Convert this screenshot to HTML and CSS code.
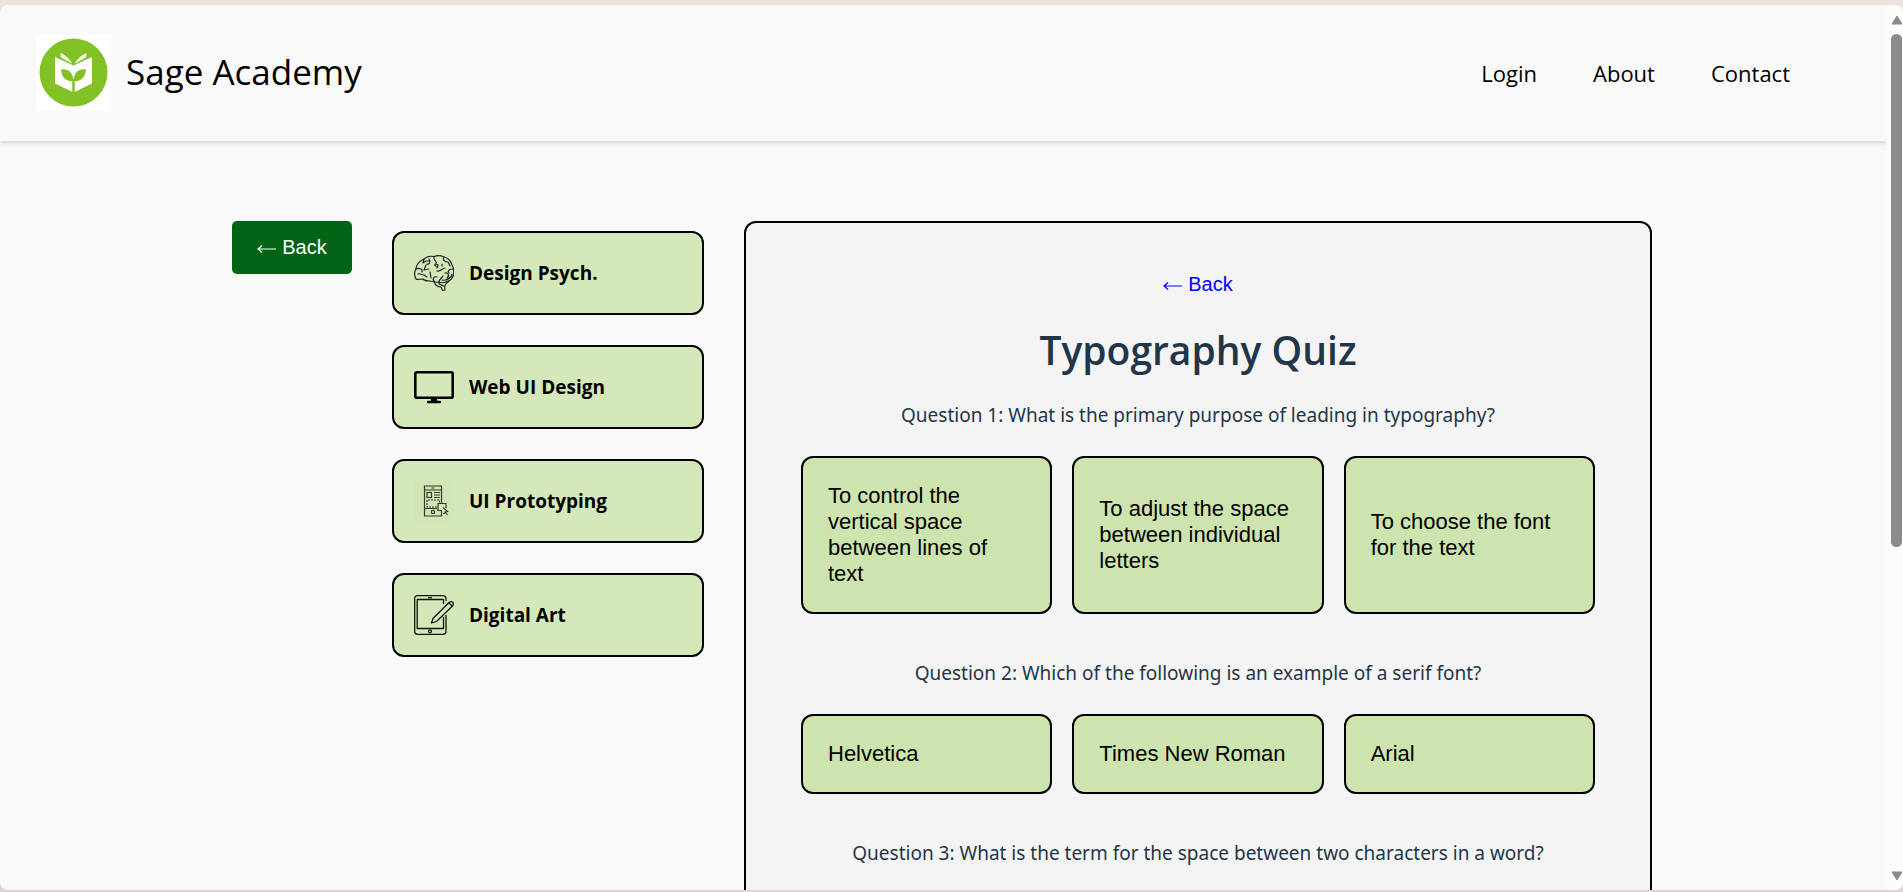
FILE: index.html
```html
<!DOCTYPE html>
<html lang="en">
<head>
<meta charset="utf-8">
<title>Sage Academy</title>
<link rel="stylesheet" href="styles.css">
</head>
<body>
<div class="window">
  <div class="page">
    <header class="header">
      <div class="brand">
        <svg class="logo" viewBox="0 0 75 76" aria-hidden="true">
          <rect width="75" height="76" fill="#fff"/>
          <circle cx="37.500" cy="37.500" r="34" fill="#82c226"/>
          <path d="M19 22L37.500 30.500L56 22V48.500L38.500 57V46H36.500V57L19 48.500Z" fill="#fff"/>
          <path d="M24.500 18C29 20 34 24 36 28.500L25 22.500ZM50.500 18C46 20 41 24 39 28.500L50 22.500Z" fill="#fff"/>
          <path d="M25 34.500C32 33.500 37 37 37.500 46C30 47 25.500 42 25 34.500ZM50 34.500C43 33.500 38 37 37.500 46C45 47 49.500 42 50 34.500Z" fill="#82c226"/>
          <path d="M37.500 44V57" stroke="#82c226" stroke-width="2"/>
        </svg>
        <span class="brand-name">Sage Academy</span>
      </div>
      <nav class="nav">
        <a href="#login">Login</a>
        <a href="#about">About</a>
        <a href="#contact">Contact</a>
      </nav>
    </header>
    <main class="main">
      <button class="back-button" type="button"><svg class="arrow" viewBox="0 0 20 12" aria-hidden="true"><path d="M19 7H1M5 3.500L1 7L5 10.500"/></svg>Back</button>
      <aside class="sidebar">
        <a class="course" href="#psych">
          <svg class="icon" viewBox="0 0 40 40" aria-hidden="true" fill="none" stroke="#222" stroke-width="1.200" stroke-linecap="round" stroke-linejoin="round">
            <path d="M2 26C0 22 0 19 2 16C2 11 6 8 10 6C13 3 17 3 20 3.500C24 2 28 3 30 4C34 5 37 8 38 12C40 15 40 18 39.500 21C39.500 25 36 28 33 28.500C30 30 27 30 25 29C21 30 18 28 16 28C12 28 10 27 9 26C6 26 3 27 2 26Z"/>
            <path d="M20 28C21 32 24 34 27 34L28.500 37.500L31 37C30 33 31 31 35 28M25 29C24 32 28 32 30 33M38 21C38 25 32 28 28 27"/>
            <path d="M10 6L9 10L12 8L15 8M12 12L10 17M2 16C6 14 9 17 8 19M10 17L15 16M15 6C17 9 15 12 13 11M20 4C19 8 24 8 22 11C20 11 20 13 24 14M22 11L24 12L23 15M30 4C28 7 31 9 34 9M34 9L36 13M23 18C27 19 28 15 31 15M39 16C35 16 33 18 35 20M31 20C34 19 36 23 33 25M4 21C6 20 7 22 10 22L13 24M20 28C18 26 20 23 23 24M16 19L17 25M25 29C25 26 28 25 29 23M28 11V13"/>
          </svg>
          Design Psych.
        </a>
        <a class="course" href="#web">
          <svg class="icon" viewBox="0 0 40 40" aria-hidden="true" fill="none" stroke="#000">
            <rect x="1.300" y="5.300" width="37.400" height="25.400" rx="1.500" stroke-width="2.600"/>
            <path d="M17 31.500H23V34H17Z" fill="#000" stroke="none"/>
            <path d="M14 35H26" stroke-width="2.400" stroke-linecap="round"/>
          </svg>
          Web UI Design
        </a>
        <a class="course" href="#prototyping">
          <svg class="icon" viewBox="0 0 40 40" aria-hidden="true" fill="none" stroke="#333d2b" stroke-width="1.200">
            <rect width="40" height="40" fill="#d2e5b7" stroke="none"/>
            <path d="M24 35H10.500V5H27.500V22M10.500 9H27.500M17.500 7H20.500M10.500 27.500H23M27.500 30V35H23"/>
            <rect x="13" y="11.500" width="4.500" height="5"/>
            <path d="M20 11.500H26M20 14H26M20 16.500H26"/>
            <path d="M23 26H13V19H25.500V22" stroke-dasharray="2 1"/>
            <circle cx="19" cy="31" r="1.700"/>
            <path d="M28 29.500H24V22.500H32V27"/>
            <path d="M29 26.500L33.500 30.500L31.500 31L33.500 34M31.500 31L29.500 33Z"/>
          </svg>
          UI Prototyping
        </a>
        <a class="course" href="#art">
          <svg class="icon" viewBox="0 0 40 40" aria-hidden="true" fill="none" stroke="#10140c" stroke-width="1.300" stroke-linejoin="round">
            <path d="M32 6V3.500Q32 .7 29 .7H3.500Q.7 .7 .7 3.500V36.500Q.7 39.300 3.500 39.300H29Q32 39.300 32 36.500V20"/>
            <path d="M29.500 9V4.500H3.200V33.500H29.500V22M14 2.600H18"/>
            <circle cx="16" cy="36.300" r="1.500"/>
            <path d="M17.500 28L19 23.500L35 7.500Q37 5.800 38.800 7.200Q40 9 38.500 11L22.500 26.500ZM35 8L38 11"/>
          </svg>
          Digital Art
        </a>
      </aside>
      <section class="quiz">
        <a class="quiz-back" href="#back"><svg class="arrow" viewBox="0 0 20 12" aria-hidden="true"><path d="M19 7H1M5 3.500L1 7L5 10.500"/></svg>Back</a>
        <h1 class="quiz-title">Typography Quiz</h1>
        <p class="question">Question 1: What is the primary purpose of leading in typography?</p>
        <div class="options">
          <button class="option" type="button">To control the vertical space between lines of text</button>
          <button class="option" type="button">To adjust the space between individual letters</button>
          <button class="option" type="button">To choose the font for the text</button>
        </div>
        <p class="question">Question 2: Which of the following is an example of a serif font?</p>
        <div class="options">
          <button class="option" type="button">Helvetica</button>
          <button class="option" type="button">Times New Roman</button>
          <button class="option" type="button">Arial</button>
        </div>
        <p class="question">Question 3: What is the term for the space between two characters in a word?</p>
      </section>
    </main>
  </div>
  <div class="scrollbar" aria-hidden="true">
    <svg class="scroll-arrow" viewBox="0 0 12 10"><path d="M6 1L11 9H1Z"/></svg>
    <div class="scroll-track"><div class="scroll-thumb"></div></div>
    <svg class="scroll-arrow" viewBox="0 0 12 10"><path d="M6 9L11 1H1Z"/></svg>
  </div>
</div>
</body>
</html>
```
FILE: styles.css
```css
* {
  box-sizing: border-box;
}

body {
  margin: 0;
  height: 100vh;
  padding: 5px 0 2px;
  overflow: hidden;
  background: linear-gradient(#f0e2e1, #e2d4d3);
  color: #000;
  font-family: "Open Sans", sans-serif;
}

a {
  color: inherit;
  text-decoration: none;
}

button {
  font-family: "Liberation Sans", Arial, sans-serif;
  cursor: pointer;
}

.window {
  display: flex;
  height: 100%;
  overflow: hidden;
  border-radius: 8px;
  background: #f9f9f9;
}

.page {
  flex: 1;
  min-width: 0;
  overflow: hidden;
}

.header {
  display: flex;
  align-items: center;
  justify-content: space-between;
  padding: 30px 97px 30px 36px;
  background: #f9f9f9;
  box-shadow: 0 2px 5px rgba(0, 0, 0, 0.15);
}

.brand {
  display: flex;
  align-items: center;
  gap: 15px;
}

.logo {
  width: 75px;
  height: 76px;
}

.brand-name {
  padding-bottom: 4px;
  font-size: 35px;
  font-weight: 500;
}

.nav {
  display: flex;
  gap: 56px;
  font-size: 22px;
}

.main {
  display: flex;
  align-items: flex-start;
  gap: 40px;
  padding: 80px 235px 80px 232px;
}

.arrow {
  width: 20px;
  height: 12px;
  margin-right: 5px;
  fill: none;
  stroke: currentColor;
  stroke-width: 1.2;
}

.back-button {
  width: 120px;
  padding: 15px 20px;
  border: 0;
  border-radius: 5px;
  background: #006414;
  color: #fff;
  font-size: 20px;
}

.sidebar {
  display: flex;
  flex: 0 0 312px;
  flex-direction: column;
  gap: 30px;
  padding-top: 10px;
}

.course {
  display: flex;
  align-items: center;
  gap: 15px;
  padding: 20px;
  border: 2px solid #000;
  border-radius: 12px;
  background: #d5e8b9;
  font-size: 19px;
  font-weight: 700;
}

.icon {
  width: 40px;
  height: 40px;
}

.quiz {
  flex: 1;
  min-width: 0;
  padding: 50px 55px;
  border: 2px solid #000;
  border-radius: 12px;
  background: #f4f4f4;
  color: #22364a;
  text-align: center;
}

.quiz-back {
  color: #00f;
  font-family: "Liberation Sans", Arial, sans-serif;
  font-size: 20px;
}

.quiz-title {
  margin: 30px 0 26px;
  font-size: 39px;
  font-weight: 600;
  line-height: 48px;
}

.question {
  margin: 0 0 26px;
  font-family: "Noto Sans", sans-serif;
  font-size: 19px;
  line-height: 30px;
}

.options {
  display: grid;
  grid-template-columns: repeat(3, 1fr);
  gap: 20px;
  margin-bottom: 44px;
}

.option {
  padding: 25px;
  border: 2px solid #000;
  border-radius: 12px;
  background: #cee4ae;
  color: #000;
  font-size: 22px;
  line-height: 26px;
  text-align: left;
}

.scrollbar {
  display: flex;
  flex: 0 0 16px;
  flex-direction: column;
  align-items: center;
  gap: 9px;
  padding: 10px 0 9px 3px;
  background: #fcfcfc;
}

.scroll-arrow {
  width: 12px;
  height: 10px;
  fill: #8b8b8b;
  stroke: #8b8b8b;
  stroke-linejoin: round;
}

.scroll-track {
  flex: 1;
}

.scroll-thumb {
  width: 11px;
  height: 62%;
  border-radius: 6px;
  background: #8b8b8b;
}
```
